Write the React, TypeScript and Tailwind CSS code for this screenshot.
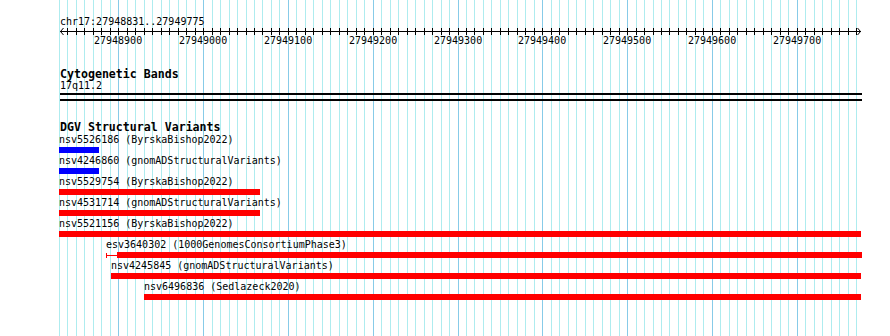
import React from "react";

const SCALE = 0.848;
const px = (b: number) => 118.3 + (b - 27948900) * SCALE;

const gridBps: number[] = [];
for (let b = 27948830; b <= 27949770; b += 10) gridBps.push(b);
const tickBps = gridBps.filter((b) => b >= 27948840);
const majorBps = [27948900, 27949000, 27949100, 27949200, 27949300, 27949400, 27949500, 27949600, 27949700];

const BLUE = "#0000ff";
const RED = "#ff0000";

type Feature = { label: string; x0: number; x1: number; color: string; thinTo?: number };

const features: Feature[] = [
  { label: "nsv5526186 (ByrskaBishop2022)", x0: 59, x1: 99, color: BLUE },
  { label: "nsv4246860 (gnomADStructuralVariants)", x0: 59, x1: 99, color: BLUE },
  { label: "nsv5529754 (ByrskaBishop2022)", x0: 59, x1: 260, color: RED },
  { label: "nsv4531714 (gnomADStructuralVariants)", x0: 59, x1: 260, color: RED },
  { label: "nsv5521156 (ByrskaBishop2022)", x0: 59, x1: 861, color: RED },
  { label: "esv3640302 (1000GenomesConsortiumPhase3)", x0: 106, x1: 862, color: RED, thinTo: 117 },
  { label: "nsv4245845 (gnomADStructuralVariants)", x0: 111, x1: 861, color: RED },
  { label: "nsv6496836 (Sedlazeck2020)", x0: 144, x1: 861, color: RED },
];

function Grid() {
  return (
    <svg className="absolute inset-0" width={890} height={336} shapeRendering="crispEdges">
      {gridBps.map((b) => {
        const major = b % 100 === 0;
        return (
          <rect key={b} x={Math.round(px(b))} y={0} width={1} height={336} fill={major ? "#87cbe8" : "#aeecef"} />
        );
      })}
    </svg>
  );
}

function Axis() {
  return (
    <svg width={803} height={8} className="block ml-[60px]" shapeRendering="crispEdges">
      <rect x={0} y={4} width={801} height={1} fill="#000" />
      {tickBps.map((b) => (
        <rect key={b} x={Math.round(px(b)) - 60} y={1} width={1} height={7} fill="#000" />
      ))}
      <polyline points="3.5,1 0.5,4.5 3.5,8" fill="none" stroke="#000" strokeWidth={1} shapeRendering="auto" />
      <polyline points="797.5,1 800.5,4.5 797.5,8" fill="none" stroke="#000" strokeWidth={1} shapeRendering="auto" />
    </svg>
  );
}

function FeatureRow({ f }: { f: Feature }) {
  return (
    <div className="h-[21px] flex flex-col">
      <div className="h-[11px] leading-[11px] text-[10px] whitespace-nowrap" style={{ marginLeft: f.x0 }}>
        {f.label}
      </div>
      {f.thinTo ? (
        <div className="mt-[2px] h-[6px] flex items-center" style={{ marginLeft: f.x0, width: f.x1 - f.x0 }}>
          <div className="w-px h-[5px] bg-[#ff0000]" />
          <div className="h-px bg-[#ff0000]" style={{ width: f.thinTo - f.x0 - 1 }} />
          <div className="h-[6px] flex-1 bg-[#ff0000]" />
        </div>
      ) : (
        <div
          className="mt-[2px] h-[6px]"
          style={{ marginLeft: f.x0, width: f.x1 - f.x0, backgroundColor: f.color }}
        />
      )}
    </div>
  );
}

export default function App() {
  return (
    <div
      className="relative w-[890px] h-[336px] overflow-hidden bg-white text-black"
      style={{ fontFamily: '"DejaVu Sans Mono", "Liberation Mono", monospace' }}
    >
      <Grid />
      <div className="relative flex flex-col">
        <div className="mt-[16px] ml-[60px] h-[11px] leading-[11px] text-[10px]">chr17:27948831..27949775</div>
        <Axis />
        <div className="relative h-[11px] leading-[11px] text-[10px]">
          {majorBps.map((b) => (
            <span key={b} className="absolute top-0" style={{ left: Math.round(px(b)) - 24 }}>
              {b}
            </span>
          ))}
        </div>
        <div className="mt-[22px] ml-[60px] h-[12px] leading-[12px] text-[11.6px] font-bold">Cytogenetic Bands</div>
        <div className="ml-[60px] h-[11px] leading-[11px] text-[10px]">17q11.2</div>
        <div className="mt-[2px] ml-[60px] w-[802px] h-[2px] bg-black" />
        <div className="mt-[4px] ml-[60px] w-[802px] h-[2px] bg-black" />
        <div className="mt-[20px] ml-[60px] h-[12px] leading-[12px] text-[11.6px] font-bold">DGV Structural Variants</div>
        <div className="mt-[1px] flex flex-col">
          {features.map((f) => (
            <FeatureRow key={f.label} f={f} />
          ))}
        </div>
      </div>
    </div>
  );
}
